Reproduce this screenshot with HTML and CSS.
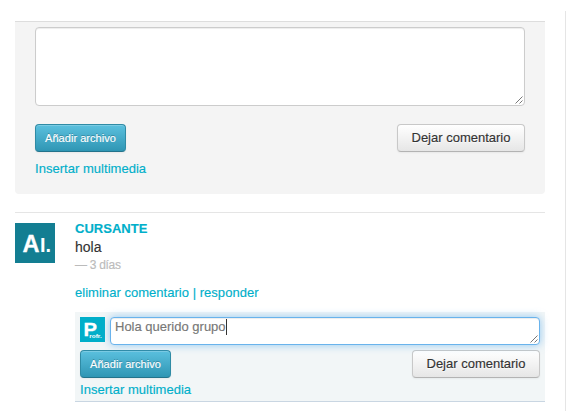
FILE: index.html
```html
<!DOCTYPE html>
<html lang="es">
<head>
<meta charset="utf-8">
<title>Comentarios</title>
<link rel="stylesheet" href="styles.css">
</head>
<body>
<main class="column">
  <section class="composer">
    <div class="field">
      <textarea class="input input-large" aria-label="Comentario"></textarea>
      <svg class="grip" viewBox="0 0 8 8"><path d="M.5 7.500l7-7M4.500 7.500l3-3"/></svg>
    </div>
    <div class="actions">
      <button class="btn btn-info">Añadir archivo</button>
      <button class="btn btn-default">Dejar comentario</button>
    </div>
    <a class="link media">Insertar multimedia</a>
  </section>
  <article class="comment">
    <svg class="avatar" viewBox="0 0 40 40"><rect width="40" height="40" fill="#137e92"/><text class="bold-letter" x="7.500" y="29" font-size="24" textLength="17" lengthAdjust="spacingAndGlyphs">A</text><text x="25" y="29" font-size="20" textLength="11" lengthAdjust="spacingAndGlyphs">I.</text></svg>
    <div class="body">
      <a class="link author">CURSANTE</a>
      <p class="message">hola</p>
      <p class="date">— 3 días</p>
      <p class="link options"><a>eliminar comentario</a> | <a>responder</a></p>
      <div class="reply">
        <div class="reply-row">
          <svg class="avatar-small" viewBox="0 0 25 25"><rect width="25" height="25" fill="#00aec9"/><text class="bold-letter" x="3.500" y="18.500" font-size="19" textLength="13.500" lengthAdjust="spacingAndGlyphs">P</text><text x="9.300" y="20.500" font-size="6" textLength="12.500" lengthAdjust="spacingAndGlyphs">rofr.</text></svg>
          <div class="field">
            <div class="input input-focus">Hola querido grupo<span class="caret"></span></div>
            <svg class="grip" viewBox="0 0 8 8"><path d="M.5 7.500l7-7M4.500 7.500l3-3"/></svg>
          </div>
        </div>
        <div class="actions">
          <button class="btn btn-info">Añadir archivo</button>
          <button class="btn btn-default">Dejar comentario</button>
        </div>
        <a class="link media">Insertar multimedia</a>
      </div>
    </div>
  </article>
</main>
</body>
</html>
```
FILE: styles.css
```css
* { box-sizing: border-box; }
body {
  margin: 0;
  padding-top: 11px;
  height: 411px;
  overflow: hidden;
  background: #fff;
  color: #333;
  font: 13px/18px "Liberation Sans", Arial, sans-serif;
  -webkit-text-stroke: .15px currentColor;
}
p { margin: 0; }
.column {
  width: 566px;
  height: 400px;
  padding: 10px 20px 0 15px;
  border-right: 1px solid #e5e5e5;
}
.composer {
  height: 173px;
  padding: 5px 20px 0;
  background: #f4f4f4;
  border-top: 1px solid #ddd;
  border-radius: 0 0 4px 4px;
}
.field { position: relative; flex: 1; }
.input {
  display: block;
  width: 100%;
  margin: 0;
  background: #fff;
  border: 1px solid #ccc;
  border-radius: 4px;
  box-shadow: inset 0 1px 1px rgba(0, 0, 0, .075);
  resize: none;
}
.input-large { height: 79px; }
.grip {
  position: absolute;
  right: 2px;
  bottom: 2px;
  width: 8px;
  height: 8px;
  fill: none;
  stroke: #555;
  stroke-width: .8;
}
.actions { display: flex; justify-content: space-between; }
.composer .actions { margin-top: 18px; }
.btn {
  height: 28px;
  margin: 0;
  padding: 0;
  border: 1px solid #ccc;
  border-radius: 4px;
  font-family: inherit;
  -webkit-text-stroke: .15px currentColor;
}
.btn-info {
  width: 91px;
  color: #fff;
  font-size: 11px;
  letter-spacing: .04px;
  background: linear-gradient(#5bc0de, #2f96b4);
  border-color: #2f8ba5 #2f8ba5 #23738b;
  text-shadow: 0 -1px 0 rgba(0, 0, 0, .25);
  box-shadow: inset 0 1px 0 rgba(255, 255, 255, .2), 0 1px 2px rgba(0, 0, 0, .05);
}
.btn-default {
  width: 128px;
  padding-bottom: 2px;
  color: #333;
  font-size: 13px;
  background: linear-gradient(#fff, #e6e6e6);
  border-color: #c8c8c8 #c8c8c8 #b3b3b3;
  text-shadow: 0 1px 1px rgba(255, 255, 255, .75);
  box-shadow: inset 0 1px 0 rgba(255, 255, 255, .2), 0 1px 2px rgba(0, 0, 0, .05);
}
.link { color: #00afca; letter-spacing: .03px; }
.media { display: block; margin-top: 8px; }
.comment {
  display: flex;
  gap: 20px;
  margin-top: 18px;
  padding-top: 10px;
  border-top: 1px solid #e5e5e5;
}
.avatar { width: 40px; height: 40px; flex: none; }
svg text {
  fill: #fff;
  font-family: "Liberation Sans", Arial, sans-serif;
  font-weight: bold;
  -webkit-text-stroke: 0;
}
svg .bold-letter { stroke: #fff; stroke-width: .3; }
.body { flex: 1; }
.author { display: block; height: 15px; line-height: 12px; font-weight: bold; }
.message { height: 18px; font-size: 14px; line-height: 18px; }
.date { height: 18px; font-size: 12px; letter-spacing: -.3px; color: #bbb; }
.options { height: 38px; padding-top: 10px; }
.reply {
  height: 90px;
  padding: 5px 5px 0;
  background: #f2f6f7;
  border-bottom: 1px solid #c9d6e2;
}
.reply-row { display: flex; gap: 5px; }
.avatar-small { width: 25px; height: 25px; flex: none; }
.input-focus {
  height: 28px;
  padding: 0 4px;
  color: #777;
  border-color: #69b3ec;
  box-shadow: inset 0 1px 1px rgba(0, 0, 0, .075), 0 0 8px rgba(82, 168, 236, .6);
}
.caret { display: inline-block; width: 1px; height: 16px; background: #333; vertical-align: -4px; }
.reply .actions { margin-top: 5px; }
.reply .media { margin-top: 3px; }
```
